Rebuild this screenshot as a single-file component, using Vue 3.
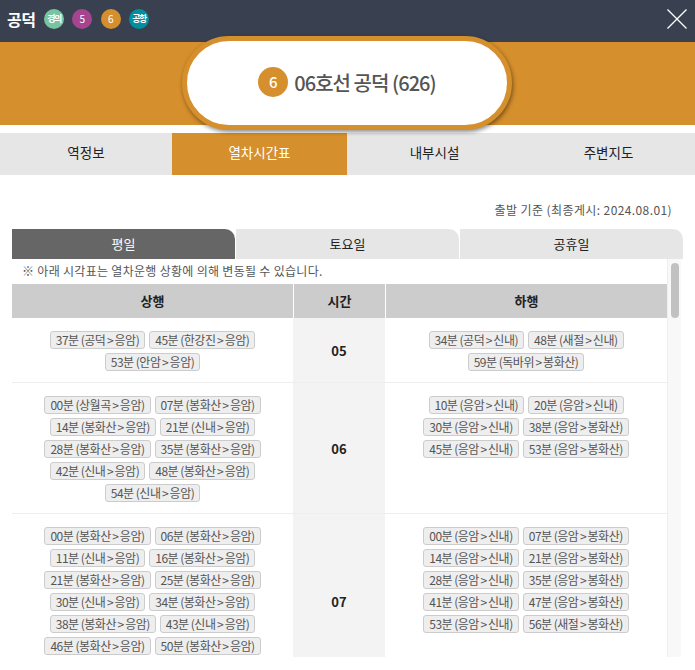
<script setup>
const lines = [
  { label: '경의', color: '#77c4a3', small: true },
  { label: '5', color: '#a6448f' },
  { label: '6', color: '#d58f2c' },
  { label: '공항', color: '#0090a0', small: true }
]
const tabs = ['역정보', '열차시간표', '내부시설', '주변지도']
const days = ['평일', '토요일', '공휴일']
const rows = [
  {
    hour: '05',
    up: ['37분 (공덕>응암)', '45분 (한강진>응암)', '53분 (안암>응암)'],
    down: ['34분 (공덕>신내)', '48분 (새절>신내)', '59분 (독바위>봉화산)']
  },
  {
    hour: '06',
    up: ['00분 (상월곡>응암)', '07분 (봉화산>응암)', '14분 (봉화산>응암)', '21분 (신내>응암)', '28분 (봉화산>응암)', '35분 (봉화산>응암)', '42분 (신내>응암)', '48분 (봉화산>응암)', '54분 (신내>응암)'],
    down: ['10분 (응암>신내)', '20분 (응암>신내)', '30분 (응암>신내)', '38분 (응암>봉화산)', '45분 (응암>신내)', '53분 (응암>봉화산)']
  },
  {
    hour: '07',
    up: ['00분 (봉화산>응암)', '06분 (봉화산>응암)', '11분 (신내>응암)', '16분 (봉화산>응암)', '21분 (봉화산>응암)', '25분 (봉화산>응암)', '30분 (신내>응암)', '34분 (봉화산>응암)', '38분 (봉화산>응암)', '43분 (신내>응암)', '46분 (봉화산>응암)', '50분 (봉화산>응암)'],
    down: ['00분 (응암>신내)', '07분 (응암>봉화산)', '14분 (응암>신내)', '21분 (응암>봉화산)', '28분 (응암>신내)', '35분 (응암>봉화산)', '41분 (응암>신내)', '47분 (응암>봉화산)', '53분 (응암>신내)', '56분 (새절>봉화산)']
  }
]
const parts = (c) => c.split('>')
</script>

<template>
  <div class="page">
    <header class="top">
      <strong class="name">공덕</strong>
      <span v-for="l in lines" :key="l.label" class="badge" :class="{ small: l.small }" :style="{ background: l.color }">{{ l.label }}</span>
      <svg class="close" width="20" height="20" viewBox="0 0 20 20" fill="none" stroke="#fff" stroke-width="1.3">
        <path d="M0.5 0.5L19.5 19.5M19.5 0.5L0.5 19.5" />
      </svg>
    </header>
    <section class="banner">
      <div class="pill">
        <span class="pill-no">6</span>
        <span class="pill-text">06호선 공덕 (626)</span>
      </div>
    </section>
    <nav class="tabs">
      <div v-for="(t, i) in tabs" :key="t" class="tab" :class="{ on: i === 1 }">{{ t }}</div>
    </nav>
    <p class="basis">출발 기준 (최종게시: 2024.08.01)</p>
    <div class="days">
      <div v-for="(d, i) in days" :key="d" class="day" :class="{ on: i === 0 }">{{ d }}</div>
    </div>
    <div class="scroller">
      <div class="content">
        <p class="note">※ 아래 시각표는 열차운행 상황에 의해 변동될 수 있습니다.</p>
        <div class="grid head">
          <div>상행</div>
          <div>시간</div>
          <div>하행</div>
        </div>
        <div v-for="r in rows" :key="r.hour" class="grid row">
          <div class="chips">
            <span v-for="c in r.up" :key="c" class="chip">{{ parts(c)[0] }}<i class="gt">&gt;</i>{{ parts(c)[1] }}</span>
          </div>
          <div class="hour">{{ r.hour }}</div>
          <div class="chips">
            <span v-for="c in r.down" :key="c" class="chip">{{ parts(c)[0] }}<i class="gt">&gt;</i>{{ parts(c)[1] }}</span>
          </div>
        </div>
      </div>
      <div class="track"><div class="thumb"></div></div>
    </div>
  </div>
</template>

<style scoped>
.page {
  width: 695px;
  height: 670px;
  overflow: hidden;
  position: relative;
  background: #fff;
  font-family: "Noto Sans CJK KR", "Noto Sans", sans-serif;
  color: #222;
}
.top {
  height: 42px;
  background: #394150;
  display: flex;
  align-items: center;
  padding: 0 0 4px 7px;
  box-sizing: border-box;
}
.name {
  color: #fff;
  font-size: 16px;
  font-weight: 700;
  letter-spacing: -0.5px;
  width: 37px;
}
.badge {
  width: 20px;
  height: 20px;
  border-radius: 50%;
  color: #fff;
  font-size: 10px;
  line-height: 20px;
  text-align: center;
  margin-right: 8.33px;
  flex: none;
  overflow: hidden;
  white-space: nowrap;
}
.badge.small {
  font-size: 9px;
  font-weight: 700;
  letter-spacing: -1.5px;
}
.close {
  margin-left: auto;
  margin-right: 8px;
}
.banner {
  height: 83px;
  background: #d58f2c;
  position: relative;
}
.pill {
  position: absolute;
  left: 182px;
  top: -6px;
  width: 320px;
  height: 82px;
  border: 5px solid #d58f2c;
  border-radius: 47px;
  background: #fff;
  box-shadow: 1px 2px 4px rgba(0, 0, 0, 0.45);
  display: flex;
  align-items: center;
  justify-content: center;
  gap: 6px;
  padding-bottom: 2px;
  z-index: 2;
}
.pill-no {
  width: 30px;
  height: 30px;
  border-radius: 50%;
  background: #d58f2c;
  color: #fff;
  font-size: 15px;
  font-weight: 500;
  line-height: 30px;
  text-align: center;
}
.pill-text {
  font-size: 20px;
  font-weight: 500;
  letter-spacing: -0.95px;
  color: #555;
}
.tabs {
  margin-top: 8px;
  height: 42px;
  display: grid;
  grid-template-columns: 172px 175px 175px 173px;
  background: #e6e6e6;
}
.tab {
  font-size: 13.5px;
  line-height: 38px;
  text-align: center;
  color: #222;
}
.tab.on {
  background: #d58f2c;
  color: #fff;
}
.basis {
  margin: 0;
  padding-top: 26px;
  padding-right: 23px;
  height: 54px;
  box-sizing: border-box;
  text-align: right;
  font-size: 12px;
  line-height: 17px;
  letter-spacing: 0.4px;
  color: #555;
}
.days {
  margin-left: 12px;
  width: 671px;
  display: grid;
  grid-template-columns: 223px 223px 223px;
  gap: 1px;
}
.day {
  height: 30px;
  line-height: 30px;
  background: #e6e6e6;
  border-top-right-radius: 10px;
  font-size: 13px;
  text-align: center;
  color: #222;
}
.day.on {
  background: #666;
  color: #fff;
}
.scroller {
  margin-left: 12px;
  width: 670px;
  height: 398px;
  overflow: hidden;
  display: flex;
}
.content {
  width: 655px;
  flex: none;
}
.note {
  margin: 0;
  height: 25px;
  padding-left: 10px;
  font-size: 12px;
  line-height: 23px;
  letter-spacing: 0.3px;
  color: #555;
}
.grid {
  display: grid;
  grid-template-columns: 281px 92px 282px;
}
.head {
  height: 34px;
  background: #ccc;
  font-size: 13px;
  font-weight: 700;
  line-height: 34px;
  text-align: center;
  color: #222;
}
.head > div + div {
  border-left: 1px solid #fff;
}
.row {
  border-bottom: 1px solid #eee;
}
.row:last-child {
  min-height: 174px;
}
.chips {
  display: flex;
  flex-wrap: wrap;
  justify-content: center;
  align-content: flex-start;
  gap: 4px;
  padding: 13px 0 11px;
}
.chip {
  height: 18px;
  box-sizing: border-box;
  border: 1px solid #ccc;
  border-radius: 3px;
  background: #eee;
  padding: 0 5px;
  font-size: 12px;
  line-height: 15px;
  letter-spacing: -0.5px;
  color: #555;
  white-space: nowrap;
}
.gt {
  font-style: normal;
  margin: 0 1.5px;
}
.hour {
  background: #f3f3f3;
  display: flex;
  align-items: center;
  justify-content: center;
  font-size: 13px;
  font-weight: 700;
  color: #222;
}
.track {
  width: 14px;
  flex: none;
  background: #f8f8f8;
  border-left: 1px solid #eee;
  box-sizing: border-box;
  padding: 4px 2px 0 3px;
}
.thumb {
  height: 55px;
  border-radius: 4px;
  background: #c1c1c1;
}
</style>
